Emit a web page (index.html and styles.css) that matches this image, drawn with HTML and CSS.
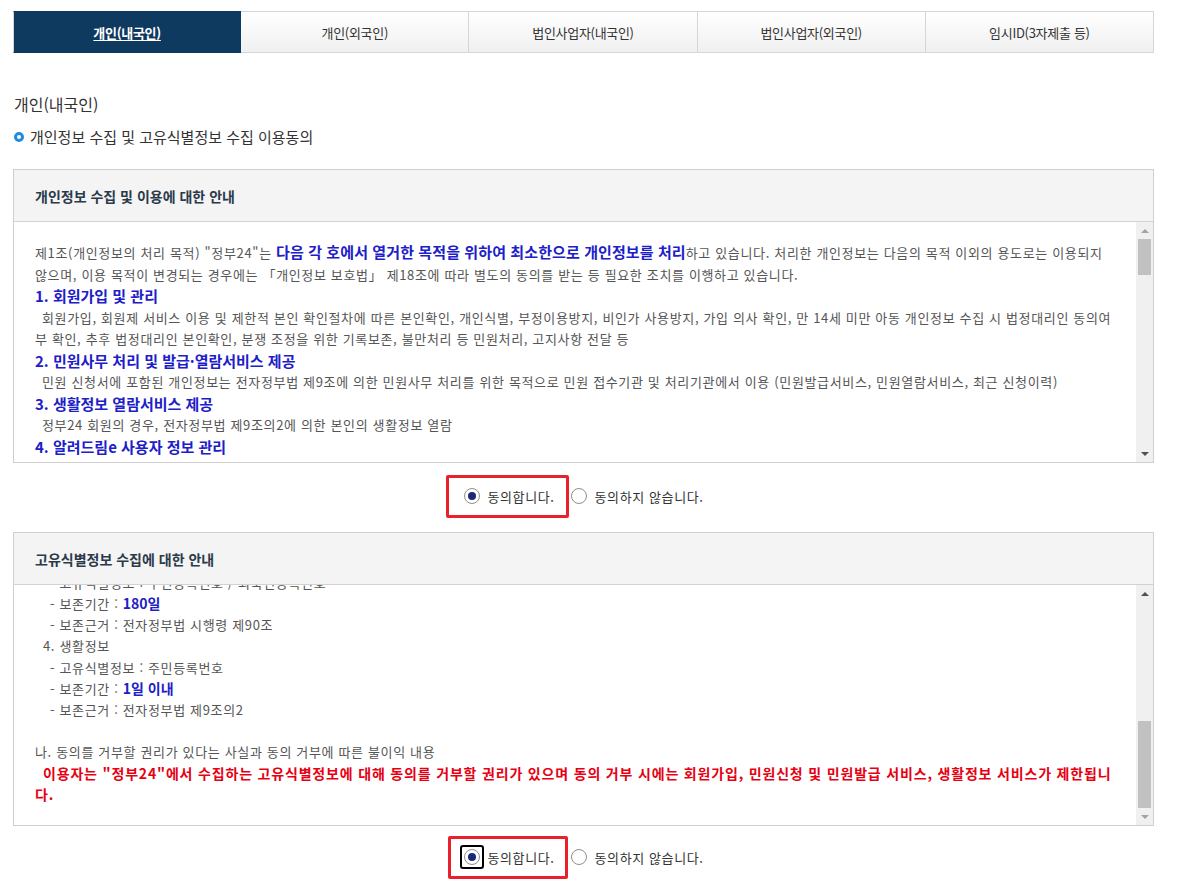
FILE: index.html
```html
<!DOCTYPE html>
<html lang="ko">
<head>
<meta charset="utf-8">
<title>개인정보 수집 이용동의</title>
<link rel="stylesheet" href="styles.css">
</head>
<body>
<div class="page">
  <ul class="tabs">
    <li class="tab tab-active"><a>개인(내국인)</a></li>
    <li class="tab"><a>개인(외국인)</a></li>
    <li class="tab"><a>법인사업자(내국인)</a></li>
    <li class="tab"><a>법인사업자(외국인)</a></li>
    <li class="tab"><a>임시ID(3자제출 등)</a></li>
  </ul>

  <h2 class="title">개인(내국인)</h2>
  <h3 class="subtitle"><span class="ring"></span>개인정보 수집 및 고유식별정보 수집 이용동의</h3>

  <section class="box">
    <div class="box-head">개인정보 수집 및 이용에 대한 안내</div>
    <div class="box-body">
      <div class="scroll-content">
        <p class="txt">제1조(개인정보의 처리 목적) "정부24"는 <b class="hl">다음 각 호에서 열거한 목적을 위하여 최소한으로 개인정보를 처리</b>하고 있습니다. 처리한 개인정보는 다음의 목적 이외의 용도로는 이용되지 않으며, 이용 목적이 변경되는 경우에는 「개인정보 보호법」 제18조에 따라 별도의 동의를 받는 등 필요한 조치를 이행하고 있습니다.</p>
        <p class="head">1. 회원가입 및 관리</p>
        <p class="txt indent">회원가입, 회원제 서비스 이용 및 제한적 본인 확인절차에 따른 본인확인, 개인식별, 부정이용방지, 비인가 사용방지, 가입 의사 확인, 만 14세 미만 아동 개인정보 수집 시 법정대리인 동의여부 확인, 추후 법정대리인 본인확인, 분쟁 조정을 위한 기록보존, 불만처리 등 민원처리, 고지사항 전달 등</p>
        <p class="head">2. 민원사무 처리 및 발급·열람서비스 제공</p>
        <p class="txt indent">민원 신청서에 포함된 개인정보는 전자정부법 제9조에 의한 민원사무 처리를 위한 목적으로 민원 접수기관 및 처리기관에서 이용 (민원발급서비스, 민원열람서비스, 최근 신청이력)</p>
        <p class="head">3. 생활정보 열람서비스 제공</p>
        <p class="txt indent">정부24 회원의 경우, 전자정부법 제9조의2에 의한 본인의 생활정보 열람</p>
        <p class="head">4. 알려드림e 사용자 정보 관리</p>
        <p class="txt indent">알려드림e 서비스를 신청한 이용자에게 생활정보, 민원처리 결과, 정책정보 등을 알림으로 전달하기 위하여 사용자 정보를 관리하며, 서비스 해지 시 지체 없이 파기합니다.</p>
      </div>
      <div class="scrollbar">
        <span class="arrow arrow-up arrow-off"></span>
        <div class="track"><div class="thumb thumb-top"></div></div>
        <span class="arrow arrow-down"></span>
      </div>
    </div>
  </section>

  <div class="agree agree-first">
    <label class="opt opt-marked"><span class="radio radio-on"></span>동의합니다.</label>
    <label class="opt"><span class="radio"></span>동의하지 않습니다.</label>
  </div>

  <section class="box">
    <div class="box-head">고유식별정보 수집에 대한 안내</div>
    <div class="box-body">
      <div class="scroll-content scroll-end">
        <p class="line">가. 수집하는 고유식별정보의 항목 및 보존기간</p>
        <p class="line lv1">3. 민원사무 처리</p>
        <p class="line lv2">- 고유식별정보 : 주민등록번호 / 외국인등록번호</p>
        <p class="line lv2">- 보존기간 : <b class="hl hl-sm">180일</b></p>
        <p class="line lv2">- 보존근거 : 전자정부법 시행령 제90조</p>
        <p class="line lv1">4. 생활정보</p>
        <p class="line lv2">- 고유식별정보 : 주민등록번호</p>
        <p class="line lv2">- 보존기간 : <b class="hl hl-sm">1일 이내</b></p>
        <p class="line lv2">- 보존근거 : 전자정부법 제9조의2</p>
        <p class="line blank"></p>
        <p class="line">나. 동의를 거부할 권리가 있다는 사실과 동의 거부에 따른 불이익 내용</p>
        <p class="warn">이용자는 "정부24"에서 수집하는 고유식별정보에 대해 동의를 거부할 권리가 있으며 동의 거부 시에는 회원가입, 민원신청 및 민원발급 서비스, 생활정보 서비스가 제한됩니다.</p>
      </div>
      <div class="scrollbar">
        <span class="arrow arrow-up"></span>
        <div class="track track-end"><div class="thumb thumb-bottom"></div></div>
        <span class="arrow arrow-down arrow-off"></span>
      </div>
    </div>
  </section>

  <div class="agree agree-second">
    <label class="opt opt-marked opt-marked-second"><span class="radio radio-on radio-focus"></span>동의합니다.</label>
    <label class="opt"><span class="radio"></span>동의하지 않습니다.</label>
  </div>
</div>
</body>
</html>
```

FILE: styles.css
```css
* { box-sizing: border-box; }
html, body { margin: 0; padding: 0; background: #fff; }
body {
  font-family: "Noto Sans CJK KR", "Malgun Gothic", "Noto Sans", sans-serif;
  color: #333;
  font-size: 13px;
}
.page {
  width: 1141px;
  margin-left: 13px;
  padding-top: 11px;
}

/* tabs */
.tabs {
  list-style: none;
  margin: 0;
  padding: 0;
  display: grid;
  grid-template-columns: repeat(5, 1fr);
  height: 42px;
}
.tab {
  border: 1px solid #d6d6d6;
  border-left: none;
  background: linear-gradient(#ffffff, #f0f0f0);
  display: flex;
  align-items: center;
  justify-content: center;
}
.tab:first-child { border-left: 1px solid #d6d6d6; }
.tab a {
  font-size: 13px;
  letter-spacing: -0.3px;
  color: #333;
}
.tab-active {
  background: #0f3a60;
  border-color: #0f3a60;
}
.tab-active a {
  color: #fff;
  font-weight: bold;
  text-decoration: underline;
  text-underline-offset: 2px;
}

/* titles */
.title {
  margin: 40px 0 0 1px;
  font-size: 16px;
  font-weight: normal;
  line-height: 22px;
  color: #333;
}
.subtitle {
  margin: 12px 0 0 1px;
  font-size: 15px;
  font-weight: normal;
  line-height: 20px;
  color: #333;
  display: flex;
  align-items: center;
}
.ring {
  width: 10px;
  height: 10px;
  border: 3px solid #1f8ae0;
  border-radius: 50%;
  margin-right: 6px;
}

/* boxes */
.box {
  border: 1px solid #cfcfcf;
  margin-top: 22px;
}
.agree-first + .box { margin-top: 15px; }
.box-head {
  height: 52px;
  background: #f4f4f4;
  border-bottom: 1px solid #d2d2d2;
  padding-left: 21px;
  display: flex;
  align-items: center;
  font-size: 14px;
  font-weight: bold;
  color: #2b3a4a;
}
.box-body {
  display: flex;
  height: 240px;
}
.scroll-content {
  flex: 1;
  overflow: hidden;
  padding: 19px 19px 0 21px;
  color: #555;
  font-size: 13px;
  letter-spacing: 0.65px;
}
.scroll-end {
  display: flex;
  flex-direction: column;
  justify-content: flex-end;
  padding-top: 0;
  padding-bottom: 20px;
}
.scroll-content p { margin: 0; }
.txt { line-height: 21.5px; }
.indent { text-indent: 7px; }
.head {
  line-height: 21.5px;
  font-size: 15px;
  font-weight: bold;
  letter-spacing: 0;
  color: #1d20c8;
}
.hl {
  font-size: 15px;
  letter-spacing: 0.1px;
  color: #1d20c8;
}
.hl-sm { font-size: 14px; letter-spacing: 0; }
.line { line-height: 21.2px; flex: none; }
.blank { height: 21.2px; }
.lv1 { padding-left: 8px; }
.lv2 { padding-left: 15px; }
.warn {
  flex: none;
  line-height: 21.2px;
  font-size: 14px;
  font-weight: bold;
  letter-spacing: 0.82px;
  color: #e60012;
  text-indent: 8px;
}

/* scrollbar */
.scrollbar {
  width: 17px;
  background: #f0f0f0;
  display: flex;
  flex-direction: column;
}
.arrow {
  height: 17px;
  flex: none;
  display: flex;
  align-items: center;
  justify-content: center;
}
.arrow::before {
  content: "";
  border-left: 4px solid transparent;
  border-right: 4px solid transparent;
}
.arrow-up::before { border-bottom: 4px solid #505050; }
.arrow-down::before { border-top: 4px solid #505050; }
.arrow-up.arrow-off::before { border-bottom-color: #a3a3a3; }
.arrow-down.arrow-off::before { border-top-color: #a3a3a3; }
.track {
  flex: 1;
  display: flex;
  flex-direction: column;
  padding: 0 2px;
}
.track-end { justify-content: flex-end; }
.thumb { background: #c1c1c1; }
.thumb-top { height: 36px; }
.thumb-bottom { height: 87px; }

/* agree radios */
.agree {
  display: flex;
  justify-content: center;
  align-items: center;
  gap: 16px;
  height: 42px;
  margin-top: 12px;
  color: #333;
  font-size: 13px;
  letter-spacing: 0.6px;
}
.agree-second { margin-top: 9px; height: 44px; }
.opt {
  position: relative;
  display: flex;
  align-items: center;
  gap: 8px;
}
.opt-marked::before {
  content: "";
  position: absolute;
  left: -18px;
  right: -14px;
  top: -12px;
  bottom: -12px;
  border: 3px solid #e8212b;
  border-radius: 2px;
}
.opt-marked-second::before {
  left: -16px;
  right: -13px;
  top: -12px;
  bottom: -12px;
}
.radio {
  width: 16px;
  height: 16px;
  border: 1px solid #8f8f8f;
  border-radius: 50%;
  background: #fff;
  display: flex;
  align-items: center;
  justify-content: center;
  position: relative;
}
.radio-on::after {
  content: "";
  width: 8px;
  height: 8px;
  border-radius: 50%;
  background: #1b2a78;
}
.radio-focus::before {
  content: "";
  position: absolute;
  left: -5px;
  top: -5px;
  right: -5px;
  bottom: -5px;
  border: 2px solid #000;
  border-radius: 3px;
}
```
